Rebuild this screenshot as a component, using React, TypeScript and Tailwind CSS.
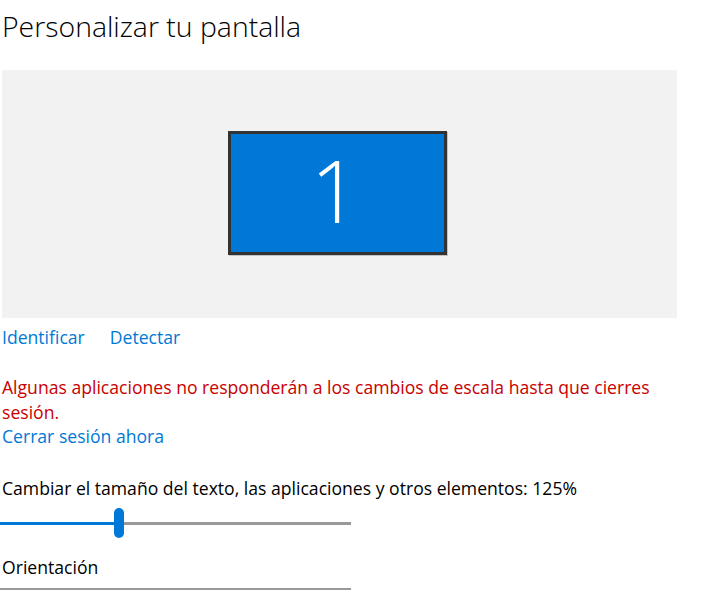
export default function App() {
  const font = { fontFamily: '"Open Sans", "Noto Sans", sans-serif' }
  return (
    <div className="w-[708px] h-[590px] overflow-hidden bg-white text-black" style={font}>
      <h1 className="ml-[2px] pt-[8px] text-[28.4px] leading-[36px] font-light">
        Personalizar tu pantalla
      </h1>

      {/* vista previa de pantallas */}
      <div className="ml-[2px] mt-[26px] w-[675px] h-[248px] bg-[#f2f2f2] flex items-center justify-center">
        <div className="w-[219px] h-[124px] -ml-[5px] -mt-[3px] border-[3px] border-[#333333] bg-[#0078d7] shadow-[1px_1px_0_#c4c4c4] flex items-center justify-center">
          <span className="text-white text-[86px] leading-none font-light -mt-[5px] -ml-[4px]">1</span>
        </div>
      </div>

      <div className="ml-[2px] mt-[7px] flex gap-[25px] text-[17.6px] leading-[25px] text-[#0078d7]">
        <span>Identificar</span>
        <span>Detectar</span>
      </div>

      <p className="ml-[2px] mt-[25px] w-[680px] text-[17.6px] leading-[25px] text-[#c80000]">
        Algunas aplicaciones no responderán a los cambios de escala hasta que cierres sesión.
      </p>
      <p className="ml-[2px] -mt-[1px] text-[17.6px] leading-[25px] text-[#0078d7]">Cerrar sesión ahora</p>

      <p className="ml-[2px] mt-[27px] text-[17.6px] leading-[25px]">
        Cambiar el tamaño del texto, las aplicaciones y otros elementos: 125%
      </p>

      {/* control deslizante */}
      <div className="mt-[7px] w-[351px] h-[30px] flex items-center">
        <div className="w-[114px] h-[3px] bg-[#0078d7]" />
        <div className="w-[10px] h-[30px] rounded-full bg-[#0078d7]" />
        <div className="flex-1 h-[3px] bg-[#999999]" />
      </div>

      <p className="ml-[2px] mt-[17px] text-[17.6px] leading-[25px]">Orientación</p>
      <div className="mt-[8px] w-[351px] h-[36px] border-t-2 border-x-2 border-[#999999]" />
    </div>
  )
}
